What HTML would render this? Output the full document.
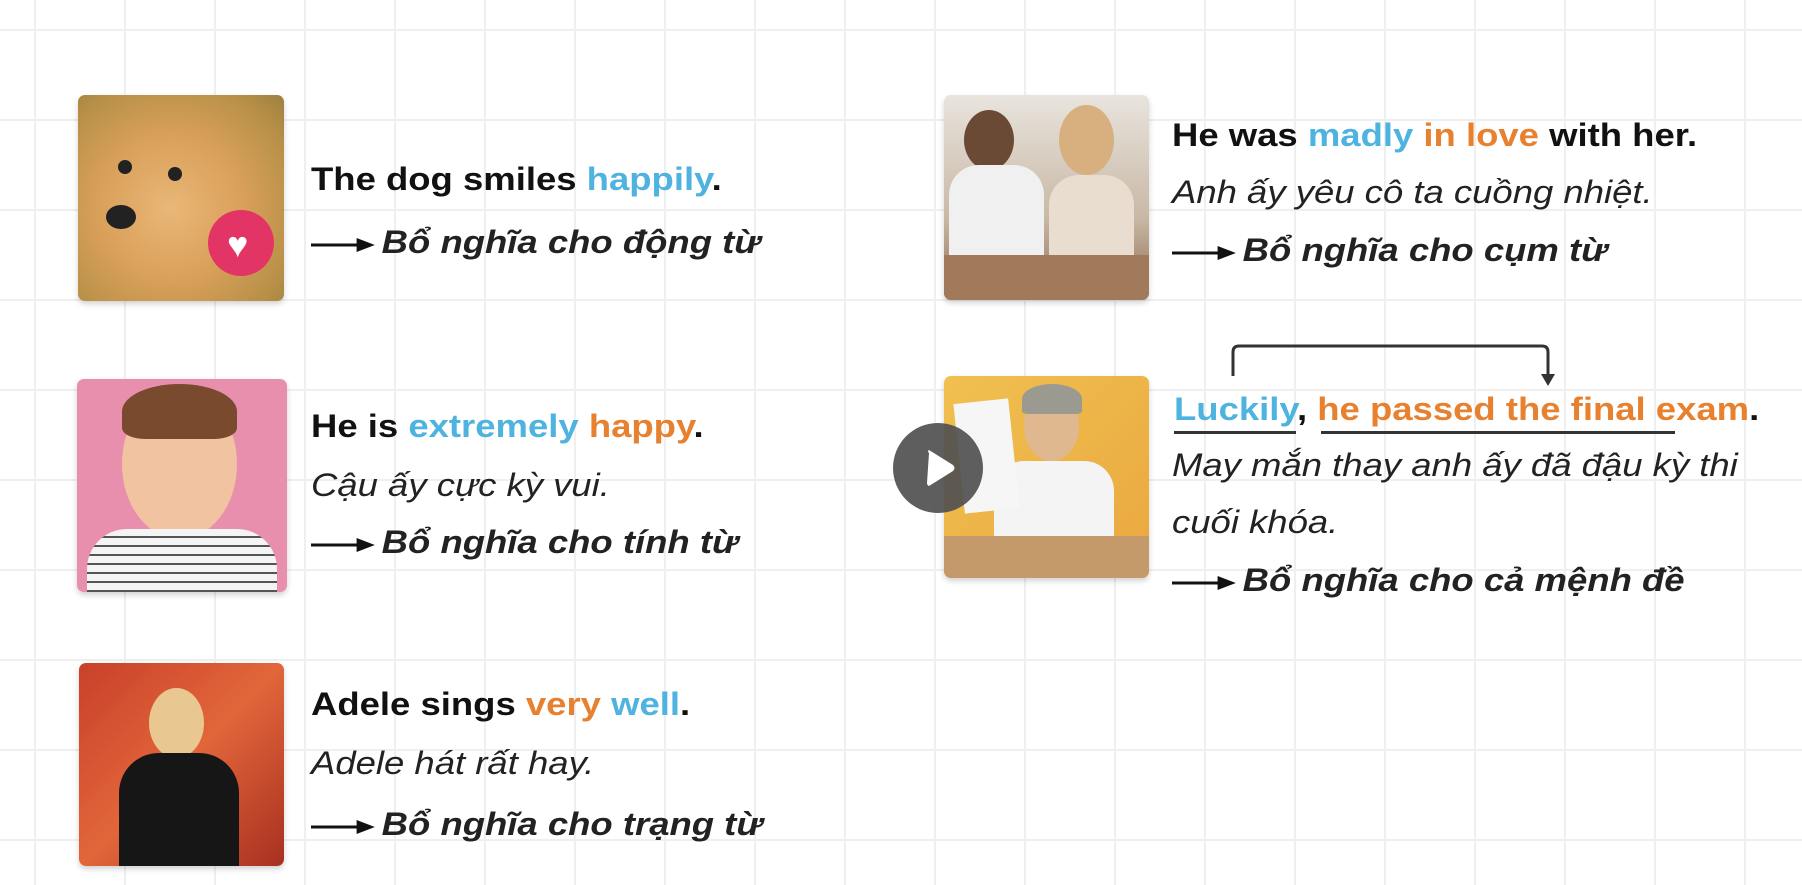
<!DOCTYPE html>
<html><head><meta charset="utf-8"><style>
html,body{margin:0;padding:0;}
body{width:1802px;height:885px;overflow:hidden;position:relative;background:#fff;font-family:"Liberation Sans",sans-serif;color:#111;}
.grid{position:absolute;inset:0;background-image:linear-gradient(to right,#efefef 2px,transparent 2px),linear-gradient(to bottom,#efefef 2px,transparent 2px);background-size:90px 90px;background-position:34px 29px;}
.img{position:absolute;border-radius:7px;overflow:hidden;box-shadow:0 3px 6px rgba(0,0,0,.18);}
.t{position:absolute;white-space:nowrap;font-size:32px;line-height:1;transform:scaleX(1.14);transform-origin:left center;}
.b{font-weight:bold;}
.i{font-style:italic;color:#222;}
.bl{color:#4fb3e0}.or{color:#e8812f}
.ar{display:inline-block;width:56px;height:16px;vertical-align:middle;margin-right:6px;}
</style></head><body>
<div class="grid"></div>

<div class="img" style="left:78px;top:95px;width:206px;height:206px;background:radial-gradient(circle at 45% 55%,#e9b777 0,#d9a05a 45%,#b89048 80%,#9c8040 100%);">
 <div style="position:absolute;left:40px;top:65px;width:14px;height:14px;border-radius:50%;background:#222"></div>
 <div style="position:absolute;left:90px;top:72px;width:14px;height:14px;border-radius:50%;background:#222"></div>
 <div style="position:absolute;left:28px;top:110px;width:30px;height:24px;border-radius:50%;background:#222"></div>
 <div style="position:absolute;left:130px;top:115px;width:66px;height:66px;border-radius:50%;background:#e33466;"></div>
 <div style="position:absolute;left:149px;top:132px;color:#fff;font-size:36px;line-height:1">♥</div>
</div>
<div class="t b" style="left:311px;top:163px">The dog smiles <span class="bl">happily</span>.</div>
<div class="t b i" style="left:311px;top:226px"><svg class="ar" viewBox="0 0 56 16"><line x1="0" y1="8" x2="44" y2="8" stroke="#111" stroke-width="3"/><path d="M40 1 L56 8 L40 15Z" fill="#111"/></svg>Bổ nghĩa cho động từ</div>

<div class="img" style="left:77px;top:379px;width:210px;height:213px;background:#e98fae;">
 <div style="position:absolute;left:45px;top:10px;width:115px;height:150px;border-radius:50%;background:#f2c3a0;"></div>
 <div style="position:absolute;left:45px;top:5px;width:115px;height:55px;border-radius:50% 50% 20% 20%;background:#7a4a2e;"></div>
 <div style="position:absolute;left:10px;top:150px;width:190px;height:70px;border-radius:40px 40px 0 0;background:repeating-linear-gradient(#f4f4f4 0 7px,#555 7px 9px);"></div>
</div>
<div class="t b" style="left:311px;top:410px">He is <span class="bl">extremely</span> <span class="or">happy</span>.</div>
<div class="t i" style="left:311px;top:469px;font-weight:normal">Cậu ấy cực kỳ vui.</div>
<div class="t b i" style="left:311px;top:526px"><svg class="ar" viewBox="0 0 56 16"><line x1="0" y1="8" x2="44" y2="8" stroke="#111" stroke-width="3"/><path d="M40 1 L56 8 L40 15Z" fill="#111"/></svg>Bổ nghĩa cho tính từ</div>

<div class="img" style="left:79px;top:663px;width:205px;height:203px;background:linear-gradient(135deg,#c8402a,#e2663a 50%,#a83020);">
 <div style="position:absolute;left:70px;top:25px;width:55px;height:70px;border-radius:50%;background:#e8c890;"></div>
 <div style="position:absolute;left:40px;top:90px;width:120px;height:120px;border-radius:40px 40px 0 0;background:#161616;"></div>
</div>
<div class="t b" style="left:311px;top:688px">Adele sings <span class="or">very</span> <span class="bl">well</span>.</div>
<div class="t i" style="left:311px;top:747px;font-weight:normal">Adele hát rất hay.</div>
<div class="t b i" style="left:311px;top:808px"><svg class="ar" viewBox="0 0 56 16"><line x1="0" y1="8" x2="44" y2="8" stroke="#111" stroke-width="3"/><path d="M40 1 L56 8 L40 15Z" fill="#111"/></svg>Bổ nghĩa cho trạng từ</div>

<div class="img" style="left:944px;top:95px;width:205px;height:205px;background:linear-gradient(180deg,#e8e4de,#c9b8a5 60%,#8a6a50);">
 <div style="position:absolute;left:20px;top:15px;width:50px;height:60px;border-radius:50%;background:#6b4a35;"></div>
 <div style="position:absolute;left:5px;top:70px;width:95px;height:110px;border-radius:30px 30px 0 0;background:#f0f0f0;"></div>
 <div style="position:absolute;left:115px;top:10px;width:55px;height:70px;border-radius:50%;background:#d8b080;"></div>
 <div style="position:absolute;left:105px;top:80px;width:85px;height:80px;border-radius:30px 30px 0 0;background:#e9ddd0;"></div>
 <div style="position:absolute;left:0;top:160px;width:205px;height:45px;background:#a07a5a;"></div>
</div>
<div class="t b" style="left:1172px;top:119px">He was <span class="bl">madly</span> <span class="or">in love</span> with her.</div>
<div class="t i" style="left:1172px;top:176px;font-weight:normal">Anh ấy yêu cô ta cuồng nhiệt.</div>
<div class="t b i" style="left:1172px;top:234px"><svg class="ar" viewBox="0 0 56 16"><line x1="0" y1="8" x2="44" y2="8" stroke="#111" stroke-width="3"/><path d="M40 1 L56 8 L40 15Z" fill="#111"/></svg>Bổ nghĩa cho cụm từ</div>

<div class="img" style="left:944px;top:376px;width:205px;height:202px;background:linear-gradient(135deg,#f0c050,#eaa840);">
 <div style="position:absolute;left:80px;top:15px;width:55px;height:70px;border-radius:50%;background:#e0b890;"></div>
 <div style="position:absolute;left:78px;top:8px;width:60px;height:30px;border-radius:50% 50% 10% 10%;background:#9a9a90;"></div>
 <div style="position:absolute;left:50px;top:85px;width:120px;height:80px;border-radius:30px 30px 0 0;background:#f4f4f4;"></div>
 <div style="position:absolute;left:15px;top:25px;width:55px;height:110px;background:#f6f6f6;transform:rotate(-6deg)"></div>
 <div style="position:absolute;left:0;top:160px;width:205px;height:42px;background:#c49a6a;"></div>
</div>
<svg style="position:absolute;left:1225px;top:338px" width="340" height="52">
 <path d="M8 38 V14 Q8 8 14 8 H317 Q323 8 323 14 V40" fill="none" stroke="#333" stroke-width="3"/>
 <path d="M316 36 L330 36 L323 48Z" fill="#333"/>
</svg>
<div class="t b" style="left:1174px;top:393px"><span class="bl">Luckily</span>, <span class="or">he passed the final exam</span>.</div>
<div style="position:absolute;left:1174px;top:431px;width:122px;height:3px;background:#333"></div>
<div style="position:absolute;left:1321px;top:431px;width:354px;height:3px;background:#333"></div>
<div class="t i" style="left:1172px;top:449px;font-weight:normal">May mắn thay anh ấy đã đậu kỳ thi</div>
<div class="t i" style="left:1172px;top:506px;font-weight:normal">cuối khóa.</div>
<div class="t b i" style="left:1172px;top:564px"><svg class="ar" viewBox="0 0 56 16"><line x1="0" y1="8" x2="44" y2="8" stroke="#111" stroke-width="3"/><path d="M40 1 L56 8 L40 15Z" fill="#111"/></svg>Bổ nghĩa cho cả mệnh đề</div>

<div style="position:absolute;left:893px;top:423px;width:90px;height:90px;border-radius:50%;background:rgba(80,80,80,.92);"></div>
<svg style="position:absolute;left:893px;top:423px" width="90" height="90"><path d="M36 30 Q34 28 36 27 L60 42 Q63 45 60 48 L36 63 Q34 62 34 60 Z" fill="#fff"/></svg>
</body></html>
